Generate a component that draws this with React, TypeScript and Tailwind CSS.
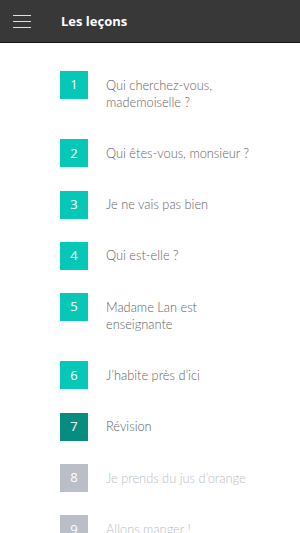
import { Fragment } from "react"

const lessons = [
  { n: 1, title: ["Qui cherchez-vous,", "mademoiselle ?"], state: "done" },
  { n: 2, title: ["Qui êtes-vous, monsieur ?"], state: "done" },
  { n: 3, title: ["Je ne vais pas bien"], state: "done" },
  { n: 4, title: ["Qui est-elle ?"], state: "done" },
  { n: 5, title: ["Madame Lan est", "enseignante"], state: "done" },
  { n: 6, title: ["J’habite près d’ici"], state: "done" },
  { n: 7, title: ["Révision"], state: "current" },
  { n: 8, title: ["Je prends du jus d’orange"], state: "locked" },
  { n: 9, title: ["Allons manger !"], state: "locked" },
]

export default function App() {
  return (
    <div className="w-[300px] h-[533px] overflow-hidden bg-white">
      {/* Header */}
      <header className="h-[43px] bg-[#383838] border-b-[1.5px] border-[#141414] flex items-center">
        <div className="w-[61px] pl-[13px] flex flex-col gap-[4.5px] mt-[1px]">
          <span className="block w-[18px] h-[1.5px] bg-[#e0e0e0]" />
          <span className="block w-[18px] h-[1.5px] bg-[#e0e0e0]" />
          <span className="block w-[18px] h-[1.5px] bg-[#e0e0e0]" />
        </div>
        <h1 className="text-white text-[13px] font-bold font-['Open_Sans',sans-serif] mt-[1px]">
          Les leçons
        </h1>
      </header>

      {/* Lessons */}
      <ul className="pt-[28px] pl-[60px] pr-4">
        {lessons.map((l) => (
          <li key={l.n} className="flex items-start gap-[18px] pb-[23.3px]">
            <div
              className={`w-[28px] h-[28px] shrink-0 flex items-center justify-center text-white text-[13px] font-['Open_Sans',sans-serif] ${
                l.state === "current"
                  ? "bg-[#078d80]"
                  : l.state === "locked"
                  ? "bg-[#b9bec7]"
                  : "bg-[#07c8b6]"
              }`}
            >
              {l.n}
            </div>
            <p
              className={`pt-[5.5px] pb-[5.5px] text-[12.8px] leading-[17px] font-light font-['Lato',sans-serif] ${
                l.state === "locked" ? "text-[#b8bcc4]" : "text-[#626262]"
              }`}
            >
              {l.title.map((t, i) => (
                <Fragment key={i}>
                  {i > 0 && <br />}
                  {t}
                </Fragment>
              ))}
            </p>
          </li>
        ))}
      </ul>
    </div>
  )
}
